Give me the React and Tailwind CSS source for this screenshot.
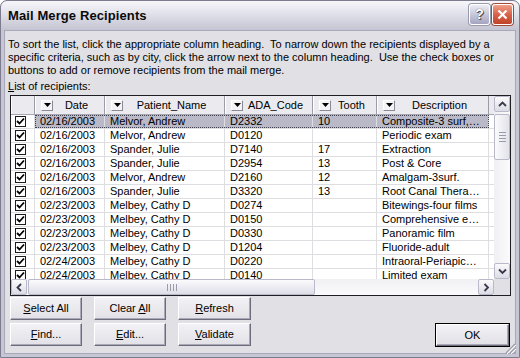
import React from "react";

const cols = [
  { key: "date", label: "Date", w: "w-[70px]" },
  { key: "name", label: "Patient_Name", w: "w-[120px]" },
  { key: "code", label: "ADA_Code", w: "w-[88px]" },
  { key: "tooth", label: "Tooth", w: "w-[64px]" },
  { key: "desc", label: "Description", w: "w-[112px]" },
];

const rows = [
  ["02/16/2003", "Melvor, Andrew", "D2332", "10", "Composite-3 surf,…"],
  ["02/16/2003", "Melvor, Andrew", "D0120", "", "Periodic exam"],
  ["02/16/2003", "Spander, Julie", "D7140", "17", "Extraction"],
  ["02/16/2003", "Spander, Julie", "D2954", "13", "Post & Core"],
  ["02/16/2003", "Melvor, Andrew", "D2160", "12", "Amalgam-3surf."],
  ["02/16/2003", "Spander, Julie", "D3320", "13", "Root Canal Thera…"],
  ["02/23/2003", "Melbey, Cathy D", "D0274", "", "Bitewings-four films"],
  ["02/23/2003", "Melbey, Cathy D", "D0150", "", "Comprehensive e…"],
  ["02/23/2003", "Melbey, Cathy D", "D0330", "", "Panoramic film"],
  ["02/23/2003", "Melbey, Cathy D", "D1204", "", "Fluoride-adult"],
  ["02/24/2003", "Melbey, Cathy D", "D0220", "", "Intraoral-Periapic…"],
  ["02/24/2003", "Melbey, Cathy D", "D0140", "", "Limited exam"],
];

function Check() {
  return (
    <div className="w-[11px] h-[11px] border border-[#1c1c1c] bg-white flex items-center justify-center">
      <svg width="9" height="9" viewBox="0 0 9 9">
        <path d="M1 4 L3.5 6.5 L8 1.5" stroke="#000" strokeWidth="1.8" fill="none" />
      </svg>
    </div>
  );
}

function DropBtn() {
  return (
    <div className="w-[12px] h-[11px] bg-[#f4f4f6] border border-t-white border-l-white border-r-[#8a8a96] border-b-[#8a8a96] flex items-center justify-center shrink-0">
      <svg width="7" height="4" viewBox="0 0 7 4">
        <path d="M0 0 H7 L3.5 4 Z" fill="#000" />
      </svg>
    </div>
  );
}

function Btn({ children, className = "", def = false }) {
  return (
    <div className={`${def ? "border border-black" : ""} ${className}`}>
      <div className="h-full flex items-center justify-center bg-linear-to-b from-[#f2f1f5] to-[#e2e1e7] border border-t-white border-l-white border-r-[#6c6c7c] border-b-[#6c6c7c] shadow-[inset_-1px_-1px_0_#a9a9b8] text-[11px] text-black">
        {children}
      </div>
    </div>
  );
}

function ScrollBtn({ dir }) {
  const paths = {
    up: "M1 5 L4.5 1.5 L8 5",
    down: "M1 1.5 L4.5 5 L8 1.5",
    left: "M5 1 L1.5 4.5 L5 8",
    right: "M1.5 1 L5 4.5 L1.5 8",
  };
  const vert = dir === "up" || dir === "down";
  return (
    <div className="w-[16px] h-[16px] shrink-0 rounded-[2px] border border-[#b9b9c9] bg-linear-to-b from-[#fbfbfd] to-[#dcdce6] flex items-center justify-center">
      <svg width={vert ? 9 : 7} height={vert ? 7 : 9} viewBox={vert ? "0 0 9 7" : "0 0 7 9"}>
        <path d={paths[dir]} stroke="#3a3a4a" strokeWidth="1.8" fill="none" />
      </svg>
    </div>
  );
}

export default function App() {
  return (
    <div className="w-[520px] h-[358px] overflow-hidden relative flex flex-col bg-[#c6c6d4] border border-[#7c7c8e] rounded-t-[7px] font-['Liberation_Sans',Arial,sans-serif] text-black">
      {/* title bar */}
      <div className="h-[29px] shrink-0 flex items-center pl-[7px] pr-[6px] bg-linear-to-b from-[#f7f7fa] via-[#dedee8] to-[#c4c4d2] rounded-t-[6px]">
        <div className="text-[13px] font-bold text-[#0a0a0a] tracking-[0.1px]">Mail Merge Recipients</div>
        <div className="ml-auto flex gap-[2px] mt-[-2px]">
          <div className="w-[21px] h-[21px] rounded-[3px] border border-white bg-linear-to-b from-[#ececf4] to-[#a4a4c0] flex items-center justify-center shadow-[0_0_0_1px_#9a9aae]">
            <span className="text-[14px] font-bold text-white [text-shadow:0_0_1px_#333,1px_1px_0_#555]">?</span>
          </div>
          <div className="w-[21px] h-[21px] rounded-[3px] border border-white bg-linear-to-b from-[#eea08a] via-[#d8624a] to-[#c04428] flex items-center justify-center shadow-[0_0_0_1px_#a04a3a]">
            <svg width="11" height="11" viewBox="0 0 11 11">
              <path d="M1.5 1.5 L9.5 9.5 M9.5 1.5 L1.5 9.5" stroke="#fff" strokeWidth="2.2" />
            </svg>
          </div>
        </div>
      </div>

      {/* body */}
      <div className="flex-1 mx-[3px] mb-[3px] bg-[#e1e0e5] border border-[#a8a8b8] flex flex-col pl-[3px]">
        <div className="pt-[7px] text-[11px] leading-[13px] whitespace-pre">
          <div>To sort the list, click the appropriate column heading.  To narrow down the recipients displayed by a</div>
          <div>specific criteria, such as by city, click the arrow next to the column heading.  Use the check boxes or</div>
          <div>buttons to add or remove recipients from the mail merge.</div>
          <div className="mt-[3px]"><span className="underline">L</span>ist of recipients:</div>
        </div>

        {/* list box */}
        <div className="mt-[2px] ml-[2px] w-[501px] h-[201px] border border-[#1e1e24] flex flex-col bg-white">
          <div className="flex h-[183px]">
            <div className="w-[483px] overflow-hidden text-[11px]">
              {/* header */}
              <div className="flex h-[19px] bg-[#ebeaef] border-b border-[#a6a6b0]">
                <div className="w-[24px] shrink-0 border-r border-[#9c9ca8] shadow-[inset_1px_0_0_#fff]" />
                {cols.map((c) => (
                  <div key={c.key} className={`${c.w} shrink-0 flex items-center pl-[6px] border-r border-[#9c9ca8] shadow-[inset_1px_0_0_#fff]`}>
                    <DropBtn />
                    <div className="flex-1 text-center pr-[4px] whitespace-nowrap">{c.label}</div>
                  </div>
                ))}
                <div className="flex-1" />
              </div>
              {/* rows */}
              {rows.map((r, i) => {
                const sel = i === 0;
                return (
                  <div key={i} className="flex h-[14px] border-b border-[#dedee2]">
                    <div className="w-[24px] shrink-0 border-r border-[#dedee2] flex items-center pl-[4px]">
                      <Check />
                    </div>
                    <div className={`flex ${sel ? "bg-[#b9b9c7] outline-1 outline-dotted outline-[#404050] -outline-offset-1" : ""}`}>
                      {cols.map((c, j) => (
                        <div key={c.key} className={`${c.w} shrink-0 border-r border-[#dedee2] pl-[5px] leading-[13px] whitespace-nowrap overflow-hidden`}>
                          {r[j]}
                        </div>
                      ))}
                    </div>
                    <div className="flex-1" />
                  </div>
                );
              })}
            </div>
            {/* vertical scrollbar */}
            <div className="w-[16px] flex flex-col bg-linear-to-r from-[#f0f0f4] to-[#fbfbfd]">
              <ScrollBtn dir="up" />
              <div className="mt-[2px] h-[46px] rounded-[2px] border border-[#b9b9c9] bg-linear-to-r from-[#fbfbfd] to-[#e2e2ea] flex flex-col items-center justify-center gap-[2px]">
                <div className="w-[7px] h-px bg-[#9a9aaa]" />
                <div className="w-[7px] h-px bg-[#9a9aaa]" />
                <div className="w-[7px] h-px bg-[#9a9aaa]" />
                <div className="w-[7px] h-px bg-[#9a9aaa]" />
              </div>
              <div className="flex-1" />
              <ScrollBtn dir="down" />
            </div>
          </div>
          {/* horizontal scrollbar */}
          <div className="flex h-[16px]">
            <div className="w-[483px] flex bg-linear-to-b from-[#f0f0f4] to-[#fbfbfd]">
              <ScrollBtn dir="left" />
              <div className="ml-px w-[287px] rounded-[2px] border border-[#b9b9c9] bg-linear-to-b from-[#fbfbfd] to-[#dedee8] flex items-center justify-center gap-[2px]">
                <div className="w-px h-[7px] bg-[#9a9aaa]" />
                <div className="w-px h-[7px] bg-[#9a9aaa]" />
                <div className="w-px h-[7px] bg-[#9a9aaa]" />
                <div className="w-px h-[7px] bg-[#9a9aaa]" />
              </div>
              <div className="flex-1" />
              <ScrollBtn dir="right" />
            </div>
            <div className="flex-1 bg-[#e1e0e5]" />
          </div>
        </div>

        {/* buttons */}
        <div className="mt-[1px] ml-[2px] flex flex-col gap-[3px]">
          <div className="flex gap-[12px]">
            <Btn className="w-[72px] h-[23px]"><span><span className="underline">S</span>elect All</span></Btn>
            <Btn className="w-[72px] h-[23px]"><span>Clear <span className="underline">A</span>ll</span></Btn>
            <Btn className="w-[73px] h-[23px]"><span><span className="underline">R</span>efresh</span></Btn>
          </div>
          <div className="flex gap-[12px] items-start">
            <Btn className="w-[72px] h-[23px]"><span><span className="underline">F</span>ind...</span></Btn>
            <Btn className="w-[72px] h-[23px]"><span><span className="underline">E</span>dit...</span></Btn>
            <Btn className="w-[73px] h-[23px]"><span><span className="underline">V</span>alidate</span></Btn>
            <Btn def className="ml-auto mr-[5px] w-[75px] h-[24px]"><span>OK</span></Btn>
          </div>
        </div>
      </div>

      {/* resize grip */}
      <svg className="absolute right-[3px] bottom-[3px]" width="12" height="12" viewBox="0 0 12 12">
        <path d="M11 2 L2 11 M11 6 L6 11 M11 10 L10 11" stroke="#9a9aaa" strokeWidth="1.2" />
        <path d="M12 3 L3 12 M12 7 L7 12" stroke="#fff" strokeWidth="1" />
      </svg>
    </div>
  );
}
